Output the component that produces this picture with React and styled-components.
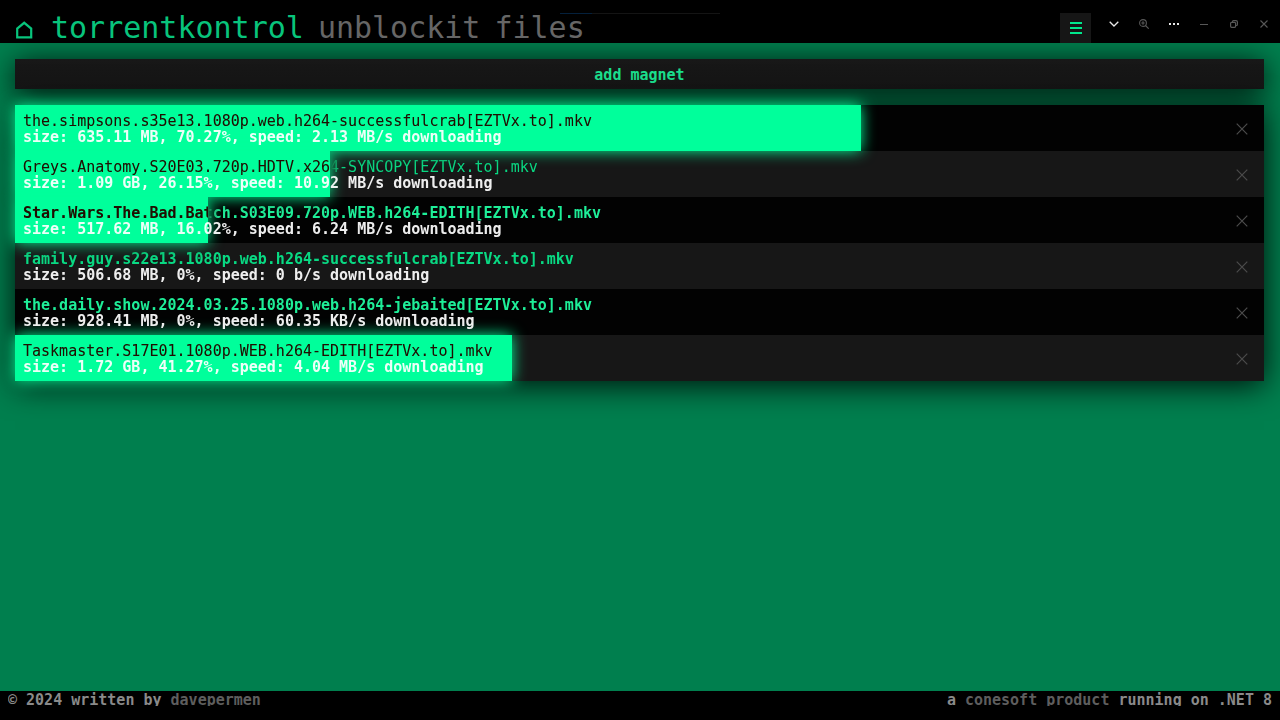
import React from "react";
import styled, { createGlobalStyle } from "styled-components";

const GlobalStyle = createGlobalStyle`
  * { box-sizing: border-box; }
  html { background: #007f4e; }
  body {
    margin: 0;
    font-family: "DejaVu Sans Mono", "Liberation Mono", monospace;
    font-size: 15px;
    line-height: 16px;
  }
  button { font: inherit; }
  a { text-decoration: none; }
`;

const Page = styled.div`
  min-height: 100vh;
  display: flex;
  flex-direction: column;
  background: #007f4e;
`;

const Header = styled.header`
  position: relative;
  display: flex;
  justify-content: space-between;
  height: 43px;
  background: #000;
`;

const LoadingBar = styled.div`
  position: absolute;
  top: 13px;
  left: 50%;
  width: 160px;
  height: 1px;
  transform: translateX(-50%);
  background: linear-gradient(to right, #04203c 20%, #141414 20%);
`;

const Nav = styled.nav`
  display: flex;
  align-items: flex-end;
  gap: 14px;
  padding-left: 15px;
`;

const NavLink = styled.a`
  display: flex;
  font-size: 30px;
  line-height: 30px;
  color: ${(p) => (p.$active ? "#08c47c" : "#666")};
`;

const HomeLink = styled(NavLink)`
  width: 22px;
  padding-bottom: 4px;
`;

const HeaderTools = styled.div`
  display: flex;
  gap: 8px;
  padding-right: 1px;
`;

const MenuButton = styled.button`
  display: grid;
  place-items: center;
  align-self: flex-end;
  width: 31px;
  height: 30px;
  padding: 0;
  border: 0;
  background: #161616;
  color: #00e88c;
`;

const WindowControls = styled.div`
  display: flex;
  align-items: flex-start;
  padding-top: 9px;
`;

const WindowButton = styled.button`
  display: grid;
  place-items: center;
  width: 30px;
  height: 30px;
  padding: 0;
  border: 0;
  background: none;
  color: ${(p) => (p.$bright ? "#e8e8e8" : "#585858")};
`;

const Main = styled.main`
  flex: 1;
  display: flex;
  flex-direction: column;
  gap: 16px;
  padding: 16px 16px 32px 15px;
`;

const AddButton = styled.button`
  height: 30px;
  padding: 2px 0 0;
  border: 0;
  background: linear-gradient(#181818, #151515);
  box-shadow: 0 4px 30px rgba(0, 0, 0, 0.9);
  color: #1be08e;
  font-weight: bold;
`;

const TorrentList = styled.ul`
  isolation: isolate;
  margin: 0;
  padding: 0;
  list-style: none;
  box-shadow: 0 4px 30px rgba(0, 0, 0, 0.9);
`;

const TorrentRow = styled.li`
  display: flex;
  height: 46px;
  background: #020202;
  &:nth-child(even) { background: #171717; }
`;

const Track = styled.div`
  position: relative;
  flex: 1;
  min-width: 0;
  padding: 8px 8px 6px;
  white-space: nowrap;
`;

const Fill = styled.div`
  position: absolute;
  top: 0;
  bottom: 0;
  left: 0;
  background: #00ff9b;
  box-shadow: 0 0 15px #00ff9b;
`;

const TorrentName = styled.div`
  position: relative;
  z-index: 1;
  color: #20f09a;
  font-weight: ${(p) => (p.$covered ? "normal" : "bold")};
  mix-blend-mode: difference;
`;

const TorrentStats = styled.div`
  position: relative;
  z-index: 1;
  color: rgba(255, 255, 255, 0.93);
  font-weight: bold;
`;

const RemoveButton = styled.button`
  display: grid;
  place-items: center;
  width: 45px;
  padding: 2px 0 0;
  border: 0;
  background: none;
  color: #4c4c4c;
`;

const Footer = styled.footer`
  display: flex;
  justify-content: space-between;
  height: 29px;
  padding: 0 8px;
  background: #000;
  color: #8a8a8a;
  font-weight: bold;
`;

const FooterText = styled.div`
  height: 15px;
  line-height: 18px;
  overflow: hidden;
  white-space: nowrap;
`;

const FooterLink = styled.a`
  color: #5e5e5e;
`;

const Svg = ({ width, height = width, stroke = 1, children }) => (
  <svg width={width} height={height} viewBox={`0 0 ${width} ${height}`} fill="none" stroke="currentColor" strokeWidth={stroke} aria-hidden="true">
    {children}
  </svg>
);

const torrents = [
  { name: "the.simpsons.s35e13.1080p.web.h264-successfulcrab[EZTVx.to].mkv", size: "635.11 MB", percent: 70.27, speed: "2.13 MB/s" },
  { name: "Greys.Anatomy.S20E03.720p.HDTV.x264-SYNCOPY[EZTVx.to].mkv", size: "1.09 GB", percent: 26.15, speed: "10.92 MB/s" },
  { name: "Star.Wars.The.Bad.Batch.S03E09.720p.WEB.h264-EDITH[EZTVx.to].mkv", size: "517.62 MB", percent: 16.02, speed: "6.24 MB/s" },
  { name: "family.guy.s22e13.1080p.web.h264-successfulcrab[EZTVx.to].mkv", size: "506.68 MB", percent: 0, speed: "0 b/s" },
  { name: "the.daily.show.2024.03.25.1080p.web.h264-jebaited[EZTVx.to].mkv", size: "928.41 MB", percent: 0, speed: "60.35 KB/s" },
  { name: "Taskmaster.S17E01.1080p.WEB.h264-EDITH[EZTVx.to].mkv", size: "1.72 GB", percent: 41.27, speed: "4.04 MB/s" },
];

function Torrent({ name, size, percent, speed }) {
  return (
    <TorrentRow>
      <Track>
        {percent > 0 && <Fill style={{ width: `${percent}%` }} />}
        <TorrentName $covered={percent > 20}>{name}</TorrentName>
        <TorrentStats>{`size: ${size}, ${percent}%, speed: ${speed} downloading`}</TorrentStats>
      </Track>
      <RemoveButton aria-label={`Remove ${name}`}>
        <Svg width={12} stroke={1.2}><path d="M.7.7l10.6 10.6M11.3.7L.7 11.3" /></Svg>
      </RemoveButton>
    </TorrentRow>
  );
}

export default function App() {
  return (
    <>
      <GlobalStyle />
      <Page>
        <Header>
          <LoadingBar />
          <Nav>
            <HomeLink $active href="#home" aria-label="Home">
              <Svg width={18} height={18} stroke={2.2}><path d="M2.2 16.400V7.600L9.200 1.800l7 5.800v8.800z" /></Svg>
            </HomeLink>
            <NavLink $active href="#torrentkontrol">torrentkontrol</NavLink>
            <NavLink href="#unblockit">unblockit</NavLink>
            <NavLink href="#files">files</NavLink>
          </Nav>
          <HeaderTools>
            <MenuButton aria-label="Menu">
              <Svg width={12} stroke={2}><path d="M0 1h12M0 6h12M0 11h12" /></Svg>
            </MenuButton>
            <WindowControls>
              <WindowButton $bright aria-label="Expand">
                <Svg width={10} height={6} stroke={1.3}><path d="M.7.7L5 5 9.300.7" /></Svg>
              </WindowButton>
              <WindowButton aria-label="Zoom">
                <Svg width={10} stroke={1.1}>
                  <circle cx="4" cy="4" r="3.4" />
                  <path d="M6.500 6.500l3.200 3.200M4 2.300v3.400M2.300 4h3.400" />
                </Svg>
              </WindowButton>
              <WindowButton $bright aria-label="More">
                <Svg width={10} height={2} stroke={2}><path d="M0 1h2M4 1h2M8 1h2" /></Svg>
              </WindowButton>
              <WindowButton aria-label="Minimize">
                <Svg width={8} height={1}><path d="M0 .5h8" /></Svg>
              </WindowButton>
              <WindowButton aria-label="Restore">
                <Svg width={8} stroke={1.2}>
                  <rect x=".6" y="2.300" width="5" height="5" rx="1" />
                  <path d="M2.500 2.300V1.500Q2.500.6 3.400.6H6q1.400 0 1.400 1.400v2.500q0 1-.9 1h-.9" />
                </Svg>
              </WindowButton>
              <WindowButton aria-label="Close">
                <Svg width={8} stroke={1.1}><path d="M.5.5l7 7M7.500.5l-7 7" /></Svg>
              </WindowButton>
            </WindowControls>
          </HeaderTools>
        </Header>
        <Main>
          <AddButton>add magnet</AddButton>
          <TorrentList>
            {torrents.map((t) => <Torrent key={t.name} {...t} />)}
          </TorrentList>
        </Main>
        <Footer>
          <FooterText>© 2024 written by <FooterLink href="#davepermen">davepermen</FooterLink></FooterText>
          <FooterText>a <FooterLink href="#conesoft">conesoft product</FooterLink> running on .NET 8</FooterText>
        </Footer>
      </Page>
    </>
  );
}
